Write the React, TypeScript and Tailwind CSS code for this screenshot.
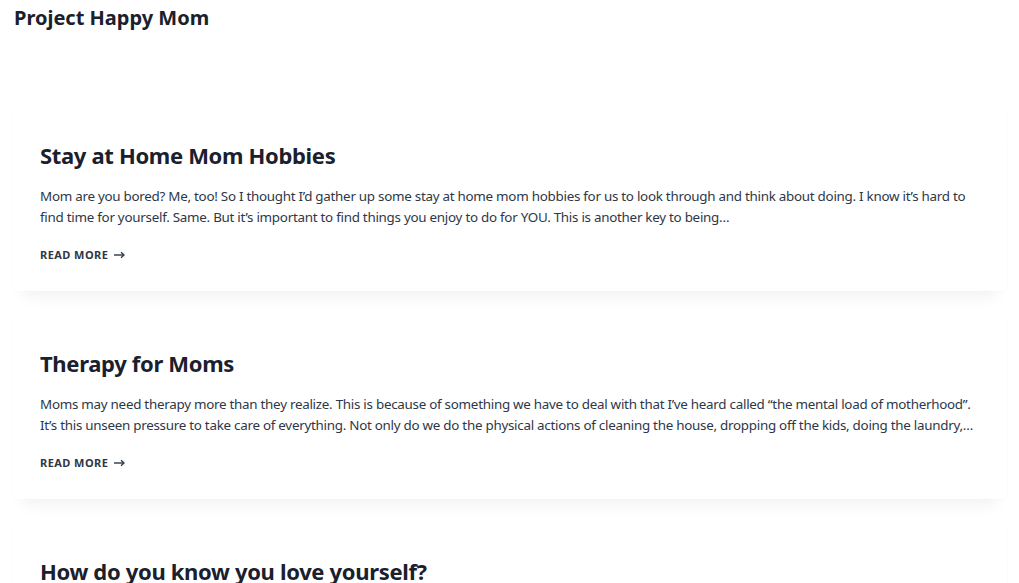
import React from "react";

const posts = [
  {
    title: "Stay at Home Mom Hobbies",
    excerpt:
      "Mom are you bored? Me, too! So I thought I’d gather up some stay at home mom hobbies for us to look through and think about doing. I know it’s hard to find time for yourself. Same. But it’s important to find things you enjoy to do for YOU. This is another key to being…",
  },
  {
    title: "Therapy for Moms",
    excerpt:
      "Moms may need therapy more than they realize. This is because of something we have to deal with that I’ve heard called “the mental load of motherhood”. It’s this unseen pressure to take care of everything. Not only do we do the physical actions of cleaning the house, dropping off the kids, doing the laundry,…",
  },
  {
    title: "How do you know you love yourself?",
    excerpt:
      "Loving yourself is something every mom needs to work on. We give so much of ourselves to our families that we often forget to take care of our own hearts and minds.",
  },
];

export default function App() {
  return (
    <div
      className="h-[583px] overflow-hidden bg-white text-[#2d3748]"
      style={{ fontFamily: '"Noto Sans", "Open Sans", sans-serif' }}
    >
      <header className="px-[14px] pt-[4px]">
        <div className="text-[20px] leading-[28px] font-bold text-[#1a202c]">
          Project Happy Mom
        </div>
      </header>
      <main className="mt-[76px] flex flex-col gap-[25px] pl-[13px] pr-[12px]">
        {posts.map((p) => (
          <article
            key={p.title}
            className="bg-white px-[27px] pt-[26px] pb-[28px] shadow-[0_15px_15px_-10px_rgba(0,0,0,0.06),0_0_2px_rgba(0,0,0,0.03)]"
          >
            <h2 className="text-[22px] leading-[42px] font-bold tracking-[-0.015em] text-[#1a202c]">
              {p.title}
            </h2>
            <p className="mt-[10px] text-[13.4px] leading-[21px] tracking-[-0.02em] text-[#2d3748]">
              {p.excerpt}
            </p>
            <div className="mt-[19px] flex items-center gap-[6px] text-[11px] leading-[16px] font-bold uppercase tracking-[0.04em] text-[#2d3748]">
              <span>Read More</span>
              <svg width="11" height="8" viewBox="0 0 11 8" fill="none">
                <path d="M0 4h9.5" stroke="#2d3748" strokeWidth="1.4" />
                <path d="M7 1.3L10 4L7 6.7" stroke="#2d3748" strokeWidth="1.3" fill="none" />
              </svg>
            </div>
          </article>
        ))}
      </main>
    </div>
  );
}
